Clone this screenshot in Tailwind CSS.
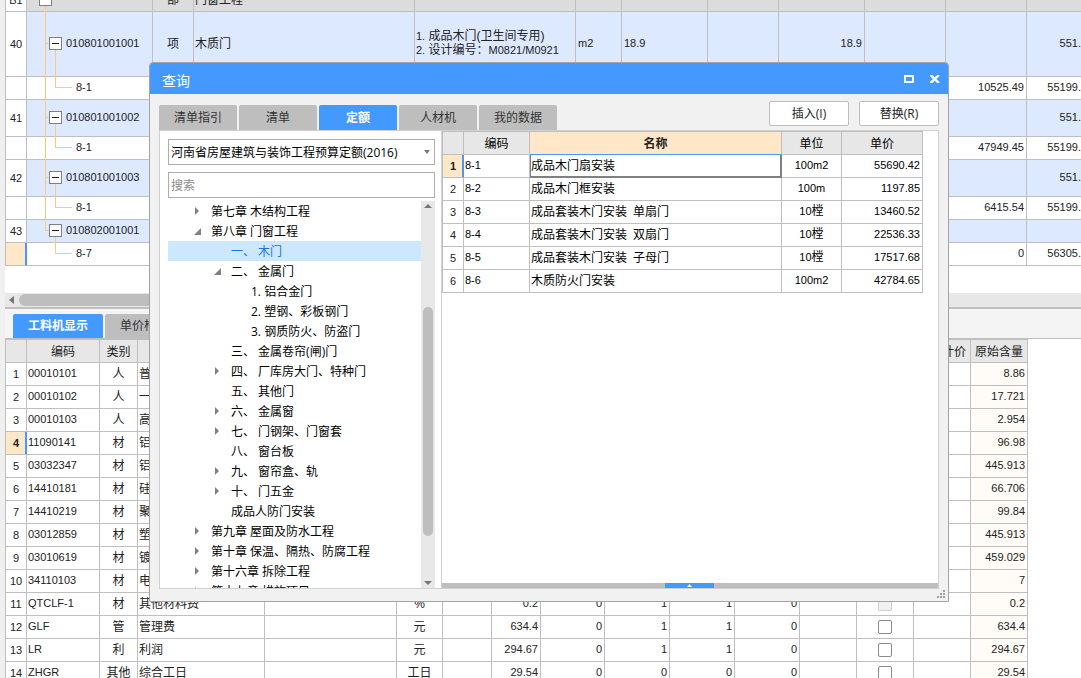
<!DOCTYPE html>
<html lang="zh-CN">
<head>
<meta charset="utf-8">
<title>查询</title>
<script src="https://cdn.jsdelivr.net/npm/@tailwindcss/browser@4"></script>
</head>
<body class="font-['Liberation_Sans','Noto_Sans_CJK_SC',sans-serif] text-xs leading-[14px] text-[#222]">
<main class="relative flex h-screen flex-col overflow-hidden bg-[#f0f0f0] pl-[5px]">

  <!-- Bill of quantities, scrolled part-way down -->
  <section class="relative h-[293px] shrink-0 overflow-hidden bg-white" aria-label="分部分项">
    <table class="-mt-[11px] w-full table-fixed border-separate border-spacing-0 border-l border-[#bfbfbf] [&_td]:border-r [&_td]:border-b [&_td]:border-[#bfbfbf] [&_td]:p-0 [&_td]:whitespace-nowrap">
      <colgroup>
        <col class="w-[21px]"><col class="w-[126px]"><col class="w-[41px]"><col class="w-[221px]"><col class="w-[161px]"><col class="w-[46px]"><col class="w-[86px]"><col class="w-[71px]"><col class="w-[86px]"><col class="w-[81px]"><col class="w-[81px]"><col>
      </colgroup>
      <tbody id="bill"></tbody>
    </table>
    <svg class="pointer-events-none absolute top-0 left-0 h-[266px] w-[80px]" viewBox="0 0 80 266" fill="#ffc880" aria-hidden="true" shape-rendering="crispEdges">
      <path d="M40 6h1v225h-1zM41 43h3v1h-3zM41 117h3v1h-3zM41 177h3v1h-3zM41 230h3v1h-3zM50 50h1v38h-1zM50 87h17v1H50zM50 124h1v24h-1zM50 147h17v1H50zM50 184h1v24h-1zM50 207h17v1H50zM50 237h1v17h-1zM50 253h17v1H50z"/>
    </svg>
  </section>

  <div class="flex h-[16px] shrink-0 items-start border-b-2 border-[#bfbfbf] bg-[#e7e7e7]">
    <svg class="mt-[3px] ml-[4px] h-[8px] w-[5px]" viewBox="0 0 5 8" fill="#757580" aria-hidden="true"><path d="M5 0v8L0 4z"/></svg>
    <div class="mt-px ml-[5px] h-3 w-[700px] rounded-full bg-[#bebebe]"></div>
  </div>

  <nav class="flex h-[30px] shrink-0 items-end gap-[2px] border-b border-[#bfbfbf] bg-[#f4f4f4] pl-2 font-['Open_Sans','Noto_Sans_CJK_SC',sans-serif]">
    <button class="h-6 w-[90px] rounded-t-xs bg-[#4499ff] font-bold text-white">工料机显示</button>
    <button class="h-6 w-[78px] rounded-t-xs bg-[#bebebe] text-[#333]">单价构成</button>
  </nav>

  <!-- Labour, material and machine breakdown -->
  <section class="flex-1 overflow-hidden bg-white" aria-label="工料机显示">
    <table class="w-[1023px] table-fixed border-separate border-spacing-0 border-t border-l border-[#bfbfbf] [&_td]:border-r [&_td]:border-b [&_td]:border-[#bfbfbf] [&_td]:p-0 [&_td]:whitespace-nowrap [&_th]:border-r [&_th]:border-b [&_th]:border-[#bfbfbf] [&_th]:px-0 [&_th]:pt-[2px] [&_th]:pb-0 [&_th]:font-normal [&_th]:whitespace-nowrap">
      <colgroup>
        <col class="w-[21px]"><col class="w-[73px]"><col class="w-[38px]"><col class="w-[127px]"><col class="w-[132px]"><col class="w-[46px]"><col class="w-[49px]"><col class="w-[49px]"><col class="w-[64px]"><col class="w-[65px]"><col class="w-[65px]"><col class="w-[65px]"><col class="w-[57px]"><col class="w-[57px]"><col class="w-[57px]"><col class="w-[57px]">
      </colgroup>
      <thead>
        <tr class="h-[23px] bg-[#e7e7e7]">
          <th></th><th>编码</th><th>类别</th><th></th><th></th><th></th><th></th><th></th><th></th><th></th><th></th><th></th><th></th><th></th><th><div class="pr-1 text-right">计价</div></th><th>原始含量</th>
        </tr>
      </thead>
      <tbody id="parts"></tbody>
    </table>
  </section>

  <!-- Query window -->
  <div role="dialog" aria-labelledby="dlg-title" class="absolute top-[62px] left-[149px] flex h-[540px] w-[800px] flex-col rounded-t border border-[#a3a3a3] bg-[#f1f1f1] font-['Open_Sans','Noto_Sans_CJK_SC',sans-serif] text-black">
    <header class="flex h-[31px] shrink-0 items-center rounded-t-[3px] bg-[#4499ff] pr-[8px] pl-3 text-white">
      <h1 id="dlg-title" class="flex-1 pt-1 text-sm leading-5">查询</h1>
      <button aria-label="最大化" class="mr-4"><svg class="block h-[8px] w-[10px]" viewBox="0 0 10 8" fill="none" stroke="#fff" stroke-width="2"><path d="M1 1h8v6H1z"/></svg></button>
      <button aria-label="关闭"><svg class="block h-[8px] w-[10px]" viewBox="0 0 10 8" fill="none" stroke="#fff" stroke-width="2.400"><path d="M0.500 0l8.500 8M9 0L0.500 8"/></svg></button>
    </header>

    <div class="flex h-9 shrink-0 items-end px-[9px]">
      <nav class="flex flex-1 gap-[2px] text-[#333]">
        <button class="h-[25px] w-[78px] rounded-t-xs bg-[#bebebe]">清单指引</button>
        <button class="h-[25px] w-[78px] rounded-t-xs bg-[#bebebe]">清单</button>
        <button class="h-[25px] w-[78px] rounded-t-xs bg-[#4499ff] font-bold text-white">定额</button>
        <button class="h-[25px] w-[78px] rounded-t-xs bg-[#bebebe]">人材机</button>
        <button class="h-[25px] w-[78px] rounded-t-xs bg-[#bebebe]">我的数据</button>
      </nav>
      <div class="flex gap-[10px] pb-1 text-[#222]">
        <button class="h-[25px] w-20 rounded-xs border border-[#bdbdbd] bg-white">插入(I)</button>
        <button class="h-[25px] w-20 rounded-xs border border-[#bdbdbd] bg-white">替换(R)</button>
      </div>
    </div>

    <div class="mx-[9px] mb-3 flex flex-1 overflow-hidden border border-[#d0d0d0] bg-white">
      <aside class="flex w-[282px] flex-col border-r border-[#d0d0d0] pt-2 pr-[6px] pl-2">
        <div class="relative">
          <select aria-label="定额库" class="block h-[26px] w-full appearance-none border border-[#adadad] bg-white pt-[2px] pl-[2px]">
            <option>河南省房屋建筑与装饰工程预算定额(2016)</option>
          </select>
          <svg class="pointer-events-none absolute top-[11px] right-[5px] h-[4px] w-[6px]" viewBox="0 0 6 4" fill="#777" aria-hidden="true"><path d="M0 0h6L3 4z"/></svg>
        </div>
        <input type="text" aria-label="搜索" placeholder="搜索" class="mt-[7px] h-[26px] w-full shrink-0 border border-[#adadad] pl-[2px] placeholder:text-[#8a8a8a]">
        <div class="mt-[3px] flex h-[387px] overflow-hidden">
          <ul id="tree" role="tree" class="flex-1"></ul>
          <div class="flex w-[14px] flex-col items-center bg-[#e8e8e8] pt-[3px] pb-[3px]">
            <svg class="h-[4px] w-[8px] shrink-0" viewBox="0 0 8 4" fill="#757580" aria-hidden="true"><path d="M0 4h8L4 0z"/></svg>
            <div class="mt-[99px] h-[229px] w-[10px] rounded-full bg-[#bebebe]"></div>
            <svg class="mt-auto h-[4px] w-[8px] shrink-0" viewBox="0 0 8 4" fill="#757580" aria-hidden="true"><path d="M0 0h8L4 4z"/></svg>
          </div>
        </div>
      </aside>

      <div class="flex flex-1 flex-col font-['Liberation_Sans','Noto_Sans_CJK_SC',sans-serif]">
        <table class="w-[481px] table-fixed border-separate border-spacing-0 border-t border-l border-[#bfbfbf] [&_td]:border-r [&_td]:border-b [&_td]:border-[#bfbfbf] [&_td]:p-0 [&_td]:whitespace-nowrap [&_th]:border-r [&_th]:border-b [&_th]:border-[#bfbfbf] [&_th]:px-0 [&_th]:pt-[2px] [&_th]:pb-0">
          <colgroup><col class="w-[21px]"><col class="w-[66px]"><col class="w-[252px]"><col class="w-[60px]"><col class="w-[81px]"></colgroup>
          <thead>
            <tr class="h-[23px] bg-[#e7e7e7]"><th></th><th class="font-normal">编码</th><th class="border-b-[#4499ff]! bg-[#ffe7c8] font-bold text-[#222]">名称</th><th class="font-normal">单位</th><th class="font-normal">单价</th></tr>
          </thead>
          <tbody id="quota"></tbody>
        </table>
        <div class="mt-auto flex h-[5px] bg-[#bebebe] pl-[223px]">
          <button aria-label="展开" class="flex h-[5px] w-[49px] items-center justify-center bg-[#4499ff]"><svg class="h-[3px] w-[5px]" viewBox="0 0 5 3" fill="#fff"><path d="M0 3h5L2.500 0z"/></svg></button>
        </div>
      </div>
    </div>

    <svg class="absolute right-[3px] bottom-[3px] h-[8px] w-[8px]" viewBox="0 0 8 8" fill="#a0a0a0" aria-hidden="true"><path d="M6 0h2v2H6zM3 3h2v2H3zM6 3h2v2H6zM0 6h2v2H0zM3 6h2v2H3zM6 6h2v2H6z"/></svg>
  </div>
</main>

<script>
  const toggle = '<button aria-label="折叠" class="flex size-[13px] items-center justify-center border border-[#808080] bg-white"><span class="h-px w-[7px] bg-[#222]"></span></button>';

  // Bill rows: number, code, kind, name, description, unit, expression, quantity, amount, price
  const bill = [
    ['B1', '', '部', '门窗工程', '', '', '', '', '', '', 'h-[23px] bg-[#dcdcdc]'],
    ['40', '010801001001', '项', '木质门', '<span class="text-[11px]">1.</span> 成品木门(卫生间专用)<br><span class="text-[11px]">2.</span> 设计编号：<span class="text-[11px]">M0821/M0921</span>', 'm2', '18.9', '18.9', '', '551.', 'h-[65px] bg-[#dde9ff]'],
    ['', '8-1', '', '', '', '', '', '', '10525.49', '55199.', 'h-[23px]'],
    ['41', '010801001002', '', '', '', '', '', '', '', '551.', 'h-[37px] bg-[#dde9ff]'],
    ['', '8-1', '', '', '', '', '', '', '47949.45', '55199.', 'h-[23px]'],
    ['42', '010801001003', '', '', '', '', '', '', '', '551.', 'h-[37px] bg-[#dde9ff]'],
    ['', '8-1', '', '', '', '', '', '', '6415.54', '55199.', 'h-[23px]'],
    ['43', '010802001001', '', '', '', '', '', '', '', '', 'h-[23px] bg-[#dde9ff]'],
    ['', '8-7', '', '', '', '', '', '', '0', '56305.', 'h-[23px]'],
  ];
  document.getElementById('bill').innerHTML = bill.map((r, i) => {
    const head = i === 0 ? 'bg-white' : i === 8 ? 'bg-[#ffe7c8] shadow-[inset_-1px_0_#4499ff] border-r-[#4499ff]!' : 'bg-white';
    const code = i === 0 ? `<div class="flex pb-[2px] pl-[12px]">${toggle}</div>`
      : r[0] ? `<div class="flex items-center gap-1 pb-[2px] pl-[22px]">${toggle}${r[1]}</div>`
      : `<div class="pb-[2px] pl-[49px]">${r[1]}</div>`;
    return `<tr class="${r[10]}"><td class="${head} text-center text-[11px]">${r[0]}</td><td class="text-[11px]">${code}</td>
      <td class="text-center">${r[2]}</td><td><div class="pl-px">${r[3]}</div></td><td><div class="pb-[2px] pl-px">${r[4]}</div></td>
      <td class="text-[11px]"><div class="pb-[2px] pl-[2px]">${r[5]}</div></td><td class="text-[11px]"><div class="pb-[2px] pl-[2px]">${r[6]}</div></td><td></td>
      <td class="text-right text-[11px]"><div class="pr-[2px] pb-[2px]">${r[7]}</div></td><td></td>
      <td class="text-right text-[11px]"><div class="pr-[2px] pb-[2px]">${r[8]}</div></td><td class="border-r-0! text-right text-[11px]"><div class="pb-[2px]">${r[9]}</div></td></tr>`;
  }).join('');

  // Breakdown rows: code, kind, name, unit, content, three figures, fourth figure, original content
  const parts = [
    ['00010101', '人', '普', '', '', '', '', '', '', '8.86'],
    ['00010102', '人', '一', '', '', '', '', '', '', '17.721'],
    ['00010103', '人', '高', '', '', '', '', '', '', '2.954'],
    ['11090141', '材', '铝', '', '', '', '', '', '', '96.98'],
    ['03032347', '材', '铝', '', '', '', '', '', '', '445.913'],
    ['14410181', '材', '硅', '', '', '', '', '', '', '66.706'],
    ['14410219', '材', '聚', '', '', '', '', '', '', '99.84'],
    ['03012859', '材', '塑', '', '', '', '', '', '', '445.913'],
    ['03010619', '材', '镀', '', '', '', '', '', '', '459.029'],
    ['34110103', '材', '电', '', '', '', '', '', '', '7'],
    ['QTCLF-1', '材', '其他材料费', '%', '0.2', '0', '1', '1', '0', '0.2'],
    ['GLF', '管', '管理费', '元', '634.4', '0', '1', '1', '0', '634.4'],
    ['LR', '利', '利润', '元', '294.67', '0', '1', '1', '0', '294.67'],
    ['ZHGR', '其他', '综合工日', '工日', '29.54', '0', '0', '0', '0', '29.54'],
  ];
  document.getElementById('parts').innerHTML = parts.map((r, i) => {
    const head = i === 3 ? 'bg-[#ffe7c8] font-bold shadow-[inset_-1px_0_#4499ff] border-r-[#4499ff]!' : '';
    const num = v => `<td class="text-right text-[11px]"><div class="pr-[2px] pb-[2px]">${v}</div></td>`;
    const box = i === 10 ? '<input type="checkbox" disabled aria-label="计价" class="block size-[14px] mx-auto appearance-none rounded-xs border border-[#d0d0d0] bg-[#f1f1f1]">'
      : i > 10 ? '<input type="checkbox" aria-label="计价" class="block size-[14px] mx-auto appearance-none rounded-xs border border-[#8c8c8c] bg-white">' : '';
    return `<tr class="h-[23px]"><td class="${head} text-center text-[11px]">${i + 1}</td><td class="text-[11px]"><div class="pb-[2px] pl-px">${r[0]}</div></td>
      <td class="text-center">${r[1]}</td><td><div class="pl-px">${r[2]}</div></td><td></td><td class="text-center">${r[3]}</td><td></td>
      ${num(r[4])}${num(r[5])}${num(r[6])}${num(r[7])}${num(r[8])}<td></td><td>${box}</td><td></td>
      <td class="bg-[#fffbf6] text-right text-[11px]"><div class="pr-[2px] pb-[2px]">${r[9]}</div></td></tr>`;
  }).join('');

  // Quota rows: code, name, unit, price
  const quota = [
    ['8-1', '成品木门扇安装', '100m2', '55690.42'],
    ['8-2', '成品木门框安装', '100m', '1197.85'],
    ['8-3', '成品套装木门安装&ensp;单扇门', '10樘', '13460.52'],
    ['8-4', '成品套装木门安装&ensp;双扇门', '10樘', '22536.33'],
    ['8-5', '成品套装木门安装&ensp;子母门', '10樘', '17517.68'],
    ['8-6', '木质防火门安装', '100m2', '42784.65'],
  ];
  document.getElementById('quota').innerHTML = quota.map((r, i) => {
    const head = i === 0 ? 'bg-[#ffe7c8] font-bold shadow-[inset_-1px_0_#4499ff] border-r-[#4499ff]!' : '';
    const sel = i === 0 ? 'border-[#808080]! shadow-[inset_1px_0_#808080,inset_-1px_0_#808080,inset_0_-1px_#808080]' : '';
    return `<tr class="h-[23px]"><td class="${head} text-center text-[11px] text-[#222]">${i + 1}</td><td class="text-[11px]"><div class="pb-[2px] pl-px">${r[0]}</div></td>
      <td class="${sel}"><div class="pl-px">${r[1]}</div></td><td class="text-center text-[11px]"><div class="pb-[2px]">${r[2].replace('樘', '<span class="text-xs">樘</span>')}</div></td>
      <td class="text-right text-[11px]"><div class="pr-[2px] pb-[2px]">${r[3]}</div></td></tr>`;
  }).join('');

  // Chapter tree: level, state (c collapsed, e expanded, s selected leaf), label
  const tree = [
    [0, 'c', '第七章 木结构工程'], [0, 'e', '第八章 门窗工程'], [1, 's', '一、 木门'], [1, 'e', '二、 金属门'],
    [2, '', '1. 铝合金门'], [2, '', '2. 塑钢、彩板钢门'], [2, '', '3. 钢质防火、防盗门'],
    [1, '', '三、 金属卷帘(闸)门'], [1, 'c', '四、 厂库房大门、特种门'], [1, '', '五、 其他门'], [1, 'c', '六、 金属窗'],
    [1, 'c', '七、 门钢架、门窗套'], [1, '', '八、 窗台板'], [1, 'c', '九、 窗帘盒、轨'], [1, 'c', '十、 门五金'], [1, '', '成品人防门安装'],
    [0, 'c', '第九章 屋面及防水工程'], [0, 'c', '第十章 保温、隔热、防腐工程'], [0, 'c', '第十六章 拆除工程'], [0, 'c', '第十七章 措施项目'],
  ];
  const pads = ['pl-[26px]', 'pl-[46px]', 'pl-[66px]'];
  const marks = {
    c: '<svg class="ml-[1px] h-[8px] w-[4px]" viewBox="0 0 4 8" fill="#808080"><path d="M0 0v8l4-4z"/></svg>',
    e: '<svg class="mt-px h-[7px] w-[7px]" viewBox="0 0 7 7" fill="#808080"><path d="M7 0v7H0z"/></svg>',
  };
  document.getElementById('tree').innerHTML = tree.map(([l, s, t]) =>
    `<li role="treeitem" class="flex h-5 items-center whitespace-nowrap ${pads[l]} ${s === 's' ? 'bg-[#cce8ff] text-[#1a73e8]' : ''}"><span class="flex w-[17px]">${marks[s] || ''}</span><span class="pt-[2px]">${t}</span></li>`).join('');
</script>
</body>
</html>
